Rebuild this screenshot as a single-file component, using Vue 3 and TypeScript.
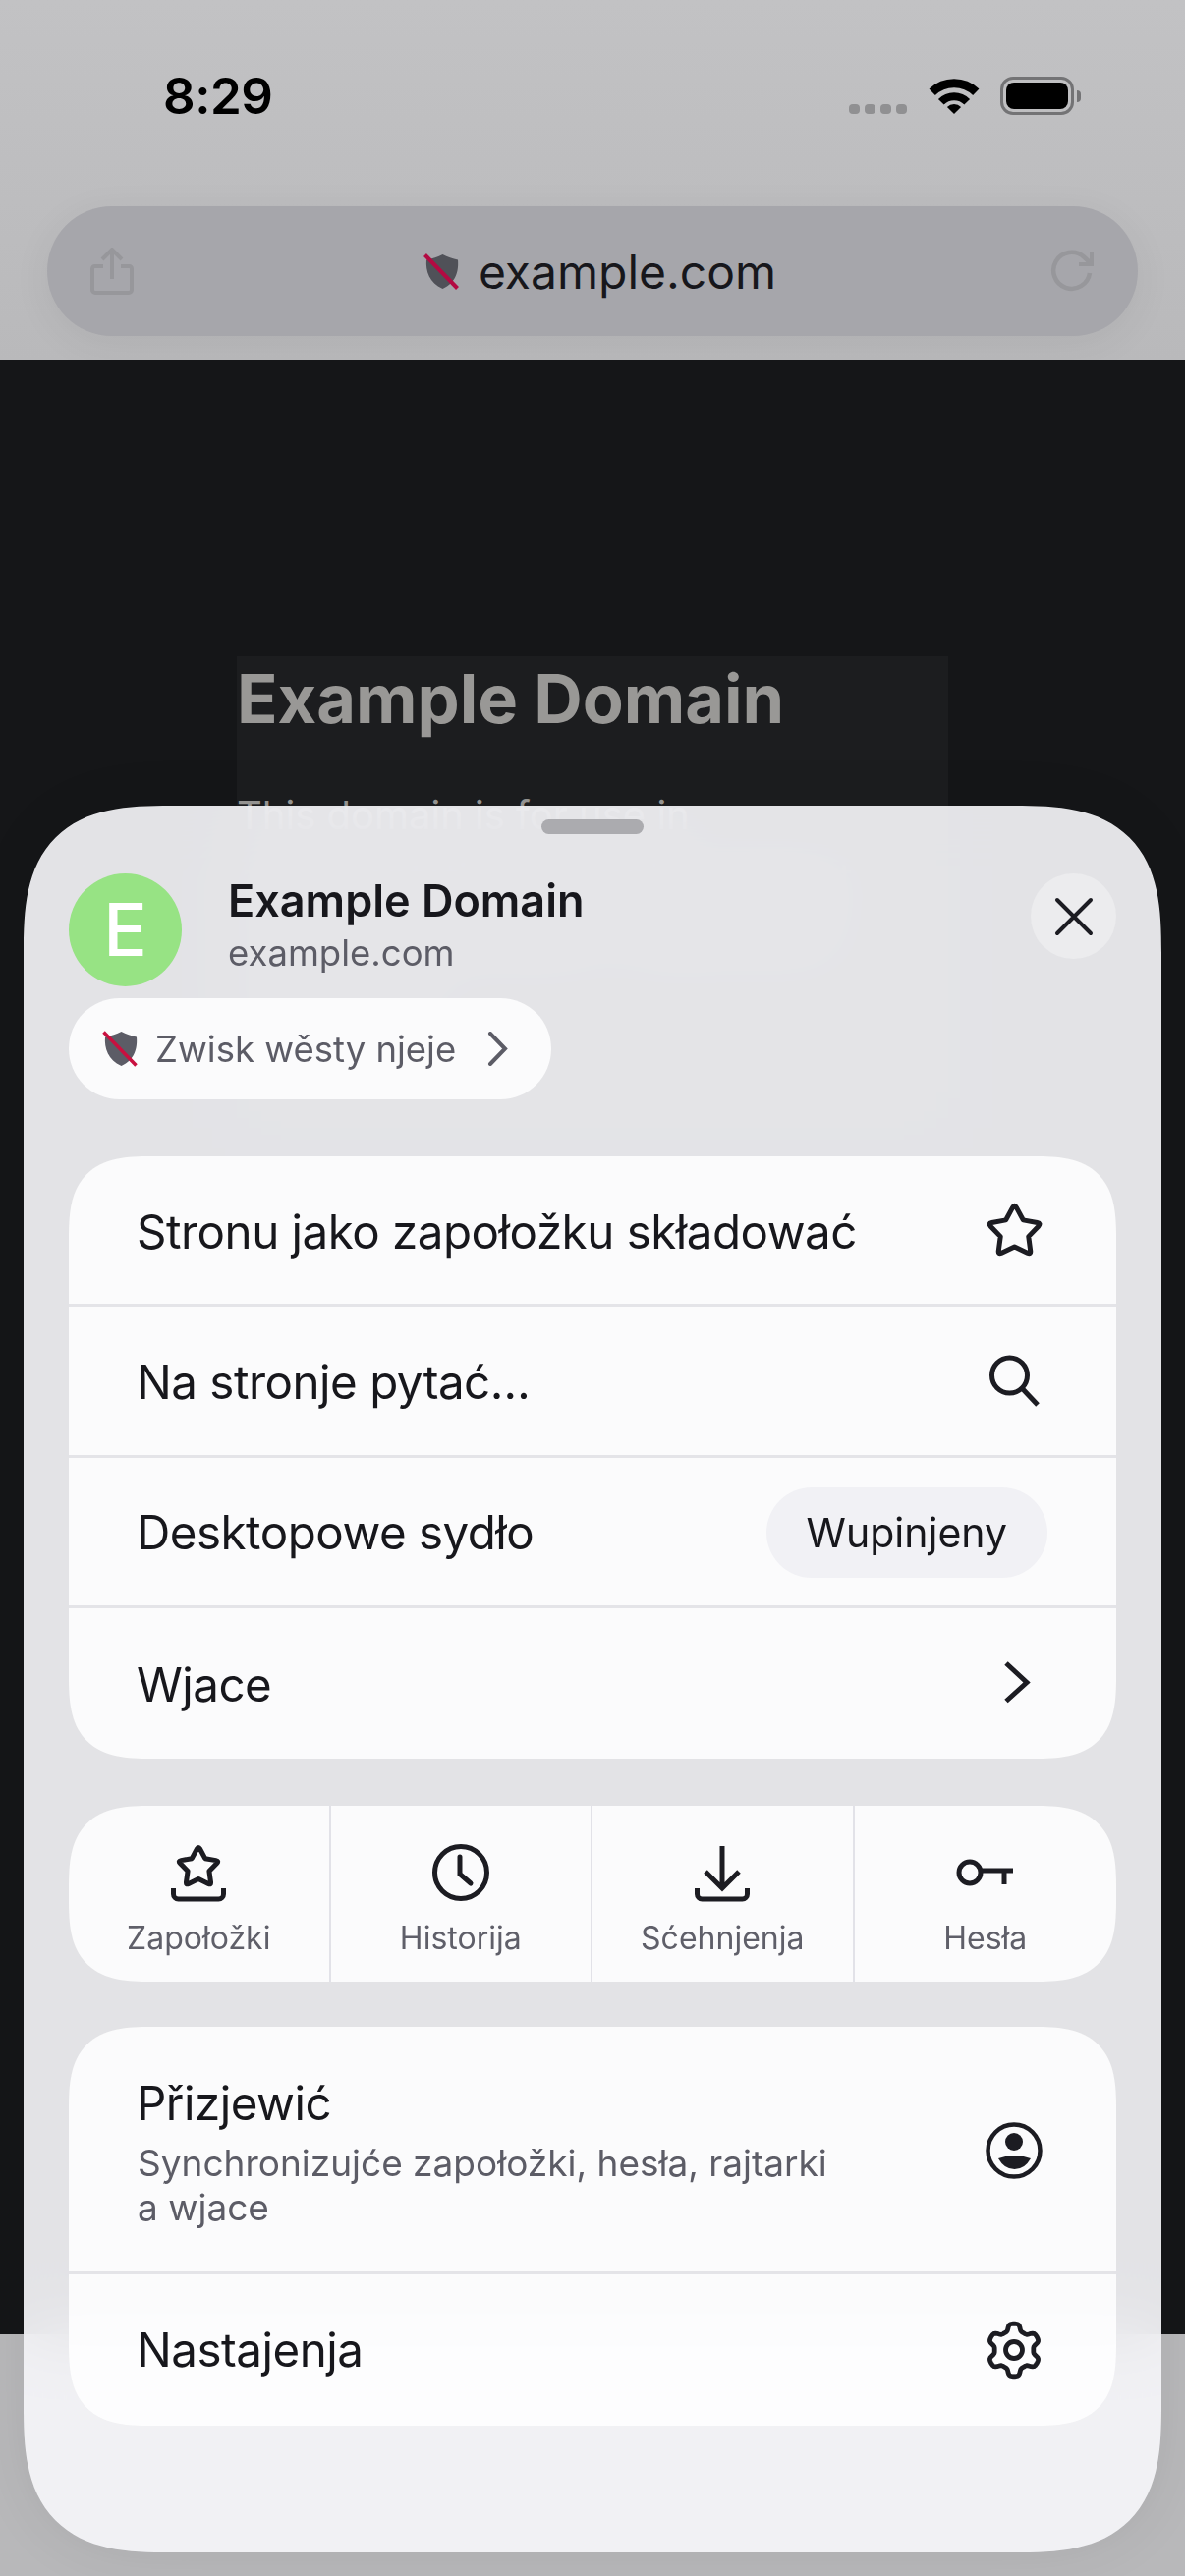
<script setup lang="ts">
interface Row { label: string; icon: string }
const star = (cx: number, cy: number, R: number, r: number, t: number): string => {
  let d = ''
  for (let i = 0; i < 5; i++) {
    const a = (-90 + i * 72) * Math.PI / 180
    const b = a + 36 * Math.PI / 180
    const pa = a - 36 * Math.PI / 180
    const ox = cx + R * Math.cos(a), oy = cy + R * Math.sin(a)
    const ix = cx + r * Math.cos(b), iy = cy + r * Math.sin(b)
    const px = cx + r * Math.cos(pa), py = cy + r * Math.sin(pa)
    const sx = ox + (px - ox) * t, sy = oy + (py - oy) * t
    const ex = ox + (ix - ox) * t, ey = oy + (iy - oy) * t
    d += `${i === 0 ? 'M' : 'L'}${sx.toFixed(2)} ${sy.toFixed(2)}Q${ox.toFixed(2)} ${oy.toFixed(2)} ${ex.toFixed(2)} ${ey.toFixed(2)}L${ix.toFixed(2)} ${iy.toFixed(2)}`
  }
  return d + 'Z'
}
const gear = (() => {
  const pts: string[] = []
  for (let i = 0; i < 180; i++) {
    const a = i * 2 * Math.PI / 180
    const w = Math.tanh(2 * Math.cos(6 * a)) / Math.tanh(2)
    const rad = 23.300 + 3.500 * w
    pts.push(`${(30 + rad * Math.sin(a)).toFixed(2)} ${(32 - rad * Math.cos(a)).toFixed(2)}`)
  }
  return 'M' + pts.join('L') + 'Z'
})()
const bigStar = star(30.5, 34, 28.5, 15, 0.22)
const smallStar = star(30, 25, 22, 11.5, 0.22)
const rows: Row[] = [
  { label: 'Stronu jako zapołožku składować', icon: 'star' },
  { label: 'Na stronje pytać…', icon: 'search' },
  { label: 'Desktopowe sydło', icon: 'toggle' },
  { label: 'Wjace', icon: 'chevron' },
]
const tiles = [
  { label: 'Zapołožki', icon: 'bookmarks' },
  { label: 'Historija', icon: 'clock' },
  { label: 'Sćehnjenja', icon: 'download' },
  { label: 'Hesła', icon: 'key' },
]
</script>

<template>
  <div class="page">
    <header class="chrome">
      <div class="status">
        <span class="time">8:29</span>
        <div class="status-icons">
          <div class="dots"><i></i><i></i><i></i><i></i></div>
          <svg class="wifi" viewBox="0 0 52 37" fill="none" stroke="#000">
            <path d="M3.7 14.7A32 32 0 0 1 48.3 14.7" stroke-width="9" />
            <path d="M12.800 24.800A18.500 18.500 0 0 1 39.200 24.800" stroke-width="8" />
            <path d="M26 37L18.900 29.900A10 10 0 0 1 33.100 29.900Z" fill="#000" stroke="none" />
          </svg>
          <div class="battery"><div class="battery-body"><div class="battery-fill"></div></div><div class="battery-cap"></div></div>
        </div>
      </div>
      <div class="urlbar">
        <svg class="url-side" viewBox="0 0 44 48" fill="none" stroke="#97979b" stroke-width="4">
          <path d="M13 19H4.500a2.500 2.500 0 0 0-2.500 2.500V43a3 3 0 0 0 3 3H39a3 3 0 0 0 3-3V21.500a2.500 2.500 0 0 0-2.500-2.500H31" />
          <path d="M22 32V3M12 12L22 2L32 12" />
        </svg>
        <div class="url-center">
          <svg class="shield-lg" viewBox="0 0 36 37">
            <path d="M19.500 1C24 3.500 30 5.500 35 6.500C36 18 33 30 19.500 36C6 30 2 18 3 6.500C9 5.500 15 3.500 19.500 1Z" fill="#505158" />
            <path d="M1.500 1.500L34.500 35.500" stroke="#b30a42" stroke-width="4" />
          </svg>
          <span class="url-text">example.com</span>
        </div>
        <svg class="url-side reload" viewBox="0 0 45 44" fill="none" stroke="#97979b" stroke-width="4.500">
          <path d="M40 24A18.500 18.500 0 1 1 34 7.500L40 13" />
          <path d="M42 2V15H29" stroke-width="4" />
        </svg>
      </div>
    </header>

    <main class="web">
      <div class="web-box">
        <h1>Example Domain</h1>
        <p>This domain is for use in documentation examples without needing permission. Avoid use in operations.</p>
      </div>
    </main>
    <footer class="bottom-bar"></footer>

    <section class="sheet">
      <div class="handle"></div>
      <div class="head">
        <div class="avatar">E</div>
        <div class="head-text">
          <div class="head-title">Example Domain</div>
          <div class="head-sub">example.com</div>
        </div>
        <button class="close">
          <svg viewBox="0 0 40 40" fill="none" stroke="#1c1c22" stroke-width="4" stroke-linecap="round">
            <path d="M3 3L37 37M37 3L3 37" />
          </svg>
        </button>
      </div>
      <div class="secure">
        <svg class="shield-sm" viewBox="0 0 36 37">
          <path d="M19.500 1C24 3.500 30 5.500 35 6.500C36 18 33 30 19.500 36C6 30 2 18 3 6.500C9 5.500 15 3.500 19.500 1Z" fill="#5c5c66" />
          <path d="M1.500 1.500L34.500 35.500" stroke="#c9103f" stroke-width="3.500" />
        </svg>
        <span>Zwisk wěsty njeje</span>
        <svg class="secure-chev" viewBox="0 0 21 35" fill="none" stroke="#5c5c66" stroke-width="4" stroke-linecap="round">
          <path d="M3 2L18 17.500L3 33" />
        </svg>
      </div>

      <div class="card menu">
        <div v-for="row in rows" :key="row.label" class="row">
          <span class="row-label">{{ row.label }}</span>
          <svg v-if="row.icon === 'star'" class="row-icon" viewBox="0 0 64 64" fill="none" stroke="#1c1c22" stroke-width="5" stroke-linejoin="round">
            <path :d="bigStar" />
          </svg>
          <svg v-else-if="row.icon === 'search'" class="row-icon" viewBox="0 0 64 64" fill="none" stroke="#1c1c22" stroke-width="5">
            <circle cx="25.500" cy="27" r="18" />
            <path d="M38.500 40.500L54 57" />
          </svg>
          <span v-else-if="row.icon === 'toggle'" class="chip">Wupinjeny</span>
          <svg v-else class="row-icon" viewBox="0 0 64 64" fill="none" stroke="#1c1c22" stroke-width="5">
            <path d="M22 12L43 31.500L22 50.500" />
          </svg>
        </div>
      </div>

      <div class="card tiles">
        <div v-for="tile in tiles" :key="tile.label" class="tile">
          <svg class="tile-icon" viewBox="0 0 60 60" fill="none" stroke="#1c1c22" stroke-width="5">
            <template v-if="tile.icon === 'bookmarks'">
              <path :d="smallStar" stroke-linejoin="round" />
              <path d="M4.500 46V52a5 5 0 0 0 5 5H50.500a5 5 0 0 0 5-5V46" />
            </template>
            <template v-else-if="tile.icon === 'clock'">
              <circle cx="30" cy="30" r="26.500" />
              <path d="M29 14V31.500L40 41" stroke-linecap="round" />
            </template>
            <template v-else-if="tile.icon === 'download'">
              <path d="M30 3V46M13 29L30 46L47 29" />
              <path d="M4.500 46V52a5 5 0 0 0 5 5H50.500a5 5 0 0 0 5-5V46" />
            </template>
            <template v-else>
              <circle cx="14" cy="30" r="11" />
              <path d="M25 28H58M49 28V42" />
            </template>
          </svg>
          <span class="tile-label">{{ tile.label }}</span>
        </div>
      </div>

      <div class="card account">
        <div class="row sign">
          <div class="sign-text">
            <span class="row-label">Přizjewić</span>
            <span class="sign-sub">Synchronizujće zapołožki, hesła, rajtarki a wjace</span>
          </div>
          <svg class="row-icon" viewBox="0 0 64 64" fill="none" stroke="#1c1c22" stroke-width="4.500">
            <circle cx="30" cy="33" r="26.500" />
            <circle cx="30" cy="24" r="9" fill="#1c1c22" stroke="none" />
            <path d="M14 41Q30.500 35 47 41Q41 52 30.500 52T14 41Z" fill="#1c1c22" stroke="none" />
          </svg>
        </div>
        <div class="row settings">
          <span class="row-label">Nastajenja</span>
          <svg class="row-icon" viewBox="0 0 64 64" fill="none" stroke="#1c1c22" stroke-width="4.800" stroke-linejoin="round">
            <path :d="gear" />
            <circle cx="30" cy="32" r="8.500" />
          </svg>
        </div>
      </div>
    </section>
  </div>
</template>

<style>
html, body { margin: 0; background: #151618; }
</style>

<style scoped>
.page {
  position: relative;
  width: 1206px;
  height: 2622px;
  overflow: hidden;
  display: flex;
  flex-direction: column;
  font-family: Inter, "Noto Sans", sans-serif;
  color: #1c1c22;
}
.chrome {
  height: 366px;
  box-sizing: border-box;
  padding: 0 48px;
  background: linear-gradient(#c2c2c4, #b9b9bb);
  flex: none;
}
.status {
  height: 210px;
  position: relative;
  display: flex;
  justify-content: space-between;
  align-items: flex-start;
  padding-top: 78px;
  box-sizing: border-box;
}
.time {
  margin-left: 118px;
  font-size: 51px;
  line-height: 39px;
  font-weight: 600;
  color: #000;
  letter-spacing: -0.5px;
}
.status-icons {
  display: flex;
  align-items: flex-end;
  margin-right: 58px;
  height: 39px;
}
.dots { display: flex; gap: 5px; margin-right: 22px; margin-bottom: 1px; }
.dots i { width: 11px; height: 10px; border-radius: 4px; background: #909092; }
.wifi { width: 52px; height: 37px; margin-right: 21px; margin-bottom: 1px; }
.battery { display: flex; align-items: center; height: 39px; }
.battery-body {
  width: 75px;
  height: 39px;
  box-sizing: border-box;
  border: 3px solid #737375;
  border-radius: 13px;
  padding: 3px;
}
.battery-fill { width: 100%; height: 100%; background: #000; border-radius: 8px; }
.battery-cap { width: 4px; height: 12px; margin-left: 3px; background: #737375; border-radius: 0 6px 6px 0; }
.urlbar {
  height: 132px;
  border-radius: 66px;
  background: #a6a6ab;
  box-shadow: 0 8px 40px rgba(0, 0, 0, 0.06);
  display: flex;
  align-items: center;
  justify-content: space-between;
  padding: 0 44px;
}
.url-side { width: 44px; height: 48px; flex: none; }
.reload { width: 45px; height: 44px; }
.url-center { display: flex; align-items: center; gap: 20px; margin-left: 16px; }
.shield-lg { width: 36px; height: 37px; margin-top: 1px; }
.url-text { font-size: 48px; line-height: 60px; color: #17171c; padding-top: 2px; }
.web { flex: 1; background: #151618; padding: 302px 0 0 241px; box-sizing: border-box; }
.web-box { width: 724px; height: 480px; background: #1c1d1f; color: #999896; }
.web-box h1 { margin: 0; padding-top: 4px; font-size: 68.500px; line-height: 80px; font-weight: 700; }
.web-box p { margin: 46px 0 0; font-size: 40px; line-height: 64px; }
.bottom-bar { height: 246px; flex: none; background: #b8b8ba; }
.sheet {
  position: absolute;
  left: 24px;
  top: 820px;
  width: 1158px;
  height: 1778px;
  box-sizing: border-box;
  padding: 14px 46px 0;
  border-radius: 150px;
  corner-shape: superellipse(1.5);
  background: rgba(245, 245, 248, 0.92);
  box-shadow: 0 0 60px rgba(0, 0, 0, 0.07);
  -webkit-backdrop-filter: blur(32px);
  backdrop-filter: blur(32px);
}
.handle { width: 104px; height: 15px; margin: 0 auto 40px; border-radius: 8px; background: #ababaf; }
.head { display: flex; align-items: flex-start; }
.avatar {
  width: 115px;
  height: 115px;
  border-radius: 50%;
  background: #97e384;
  color: #fff;
  font-size: 74px;
  line-height: 115px;
  text-align: center;
  flex: none;
  font-weight: 500;
}
.head-text { margin-left: 47px; flex: 1; padding-top: 1px; }
.head-title { font-size: 45px; line-height: 54px; font-weight: 600; color: #17171c; }
.head-sub { font-size: 36.500px; line-height: 48px; color: #5c5c66; margin-top: 2px; }
.close {
  width: 87px;
  height: 87px;
  border: 0;
  padding: 0;
  border-radius: 50%;
  background: #ececee;
  display: flex;
  align-items: center;
  justify-content: center;
}
.close svg { width: 40px; height: 40px; }
.secure {
  margin-top: 12px;
  width: 491px;
  height: 103px;
  border-radius: 52px;
  background: #fbfbfc;
  display: flex;
  align-items: center;
  color: #5c5c66;
  font-size: 36.500px;
  box-sizing: border-box;
  padding-left: 34px;
}
.shield-sm { width: 36px; height: 37px; flex: none; margin-right: 18px; }
.secure-chev { width: 21px; height: 35px; margin-left: 32px; flex: none; }
.card {
  background: rgba(255, 255, 255, 0.86);
  border-radius: 84px;
  corner-shape: superellipse(1.5);
  overflow: hidden;
}
.menu { margin-top: 58px; height: 613px; display: grid; grid-template-rows: repeat(4, 1fr); }
.row {
  display: flex;
  align-items: center;
  justify-content: space-between;
  padding: 0 70px;
  box-sizing: border-box;
  border-bottom: 3px solid #e4e4e8;
}
.row:last-child { border-bottom: 0; }
.row-label { font-size: 47.500px; line-height: 60px; color: #17171c; letter-spacing: -0.5px; padding-top: 3px; margin-left: -1px; }
.row-icon { width: 64px; height: 64px; flex: none; }
.chip {
  height: 92px;
  line-height: 92px;
  padding: 0 41px;
  border-radius: 46px;
  background: #f1f1f5;
  font-size: 41px;
  color: #17171c;
  margin-top: 3px;
}
.tiles { margin-top: 48px; height: 179px; display: grid; grid-template-columns: repeat(4, 1fr); }
.tile {
  display: flex;
  flex-direction: column;
  align-items: center;
  border-right: 2px solid #e2e2e8;
  padding-top: 38px;
  box-sizing: border-box;
}
.tile:last-child { border-right: 0; }
.tile-icon { width: 60px; height: 60px; flex: none; }
.tile-label { margin-top: 17px; font-size: 32px; line-height: 40px; color: #5f5f69; }
.account { margin-top: 46px; }
.sign { height: 252px; }
.sign-text { display: flex; flex-direction: column; width: 720px; }
.sign .row-label { padding-top: 5px; }
.sign-sub { margin-top: 8px; font-size: 37px; line-height: 45px; color: #5c5c66; }
.settings { height: 154px; }
.settings .row-label { padding-top: 0; }
</style>
